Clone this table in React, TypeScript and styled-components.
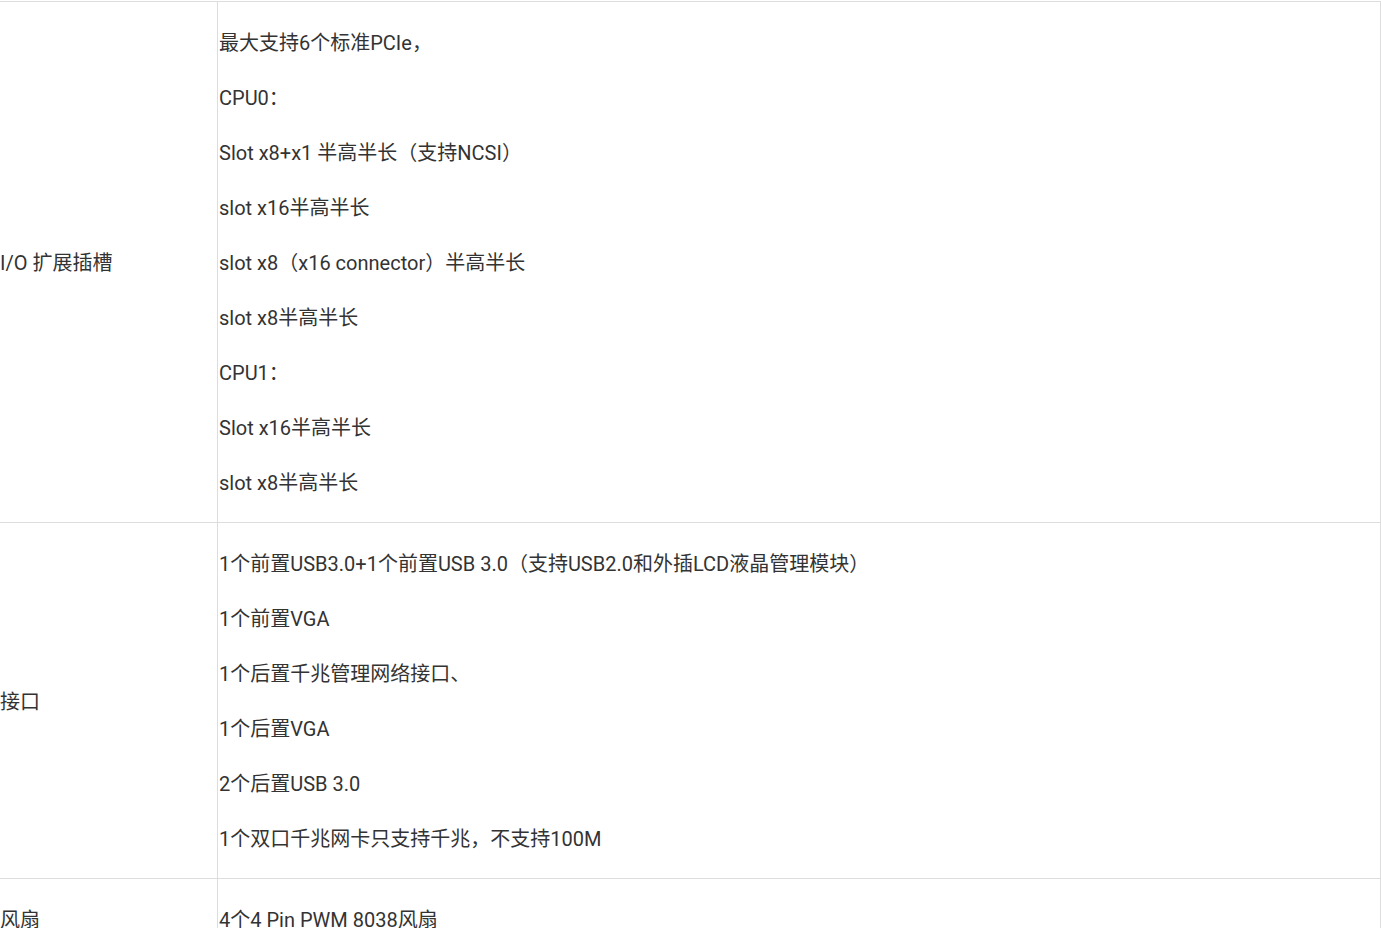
import React from "react";
import styled, { createGlobalStyle } from "styled-components";

type rowType = {
  label: string;
  lines: string[];
};

const rows: rowType[] = [
  {
    label: "I/O 扩展插槽",
    lines: [
      "最大支持6个标准PCIe，",
      "CPU0：",
      "Slot x8+x1 半高半长（支持NCSI）",
      "slot x16半高半长",
      "slot x8（x16 connector）半高半长",
      "slot x8半高半长",
      "CPU1：",
      "Slot x16半高半长",
      "slot x8半高半长",
    ],
  },
  {
    label: "接口",
    lines: [
      "1个前置USB3.0+1个前置USB 3.0（支持USB2.0和外插LCD液晶管理模块）",
      "1个前置VGA",
      "1个后置千兆管理网络接口、",
      "1个后置VGA",
      "2个后置USB 3.0",
      "1个双口千兆网卡只支持千兆，不支持100M",
    ],
  },
  {
    label: "风扇",
    lines: ["4个4 Pin PWM 8038风扇"],
  },
];

const GlobalStyle = createGlobalStyle`
  html, body {
    margin: 0;
    padding: 0;
    overflow: hidden;
    background: #ffffff;
  }
  body {
    font-family: Roboto, "Noto Sans CJK SC", sans-serif;
    color: #333333;
    font-size: 20px;
  }
`;

const SpecTable = styled.table`
  border-collapse: collapse;
  width: 1383px;
  margin: 1px 0 0 -2px;
  table-layout: fixed;
`;

const LabelTd = styled.td`
  width: 218px;
  border: 1px solid #dddddd;
  padding: 2px 0 0 1px;
  vertical-align: middle;
  line-height: 30px;
  white-space: nowrap;
`;

const ValueTd = styled.td`
  border: 1px solid #dddddd;
  padding: 1px 0 0 1px;
  vertical-align: top;
`;

const Line = styled.p`
  margin: 25px 0;
  line-height: 30px;
  white-space: nowrap;

  &:last-child {
    margin-bottom: 24px;
  }
`;

export default function App(): React.ReactElement {
  return (
    <>
      <GlobalStyle />
      <SpecTable>
        <colgroup>
          <col style={{ width: 219 }} />
          <col />
        </colgroup>
        <tbody>
          {rows.map((row) => (
            <tr key={row.label}>
              <LabelTd>{row.label}</LabelTd>
              <ValueTd>
                {row.lines.map((line, i) => (
                  <Line key={i}>{line}</Line>
                ))}
              </ValueTd>
            </tr>
          ))}
        </tbody>
      </SpecTable>
    </>
  );
}
